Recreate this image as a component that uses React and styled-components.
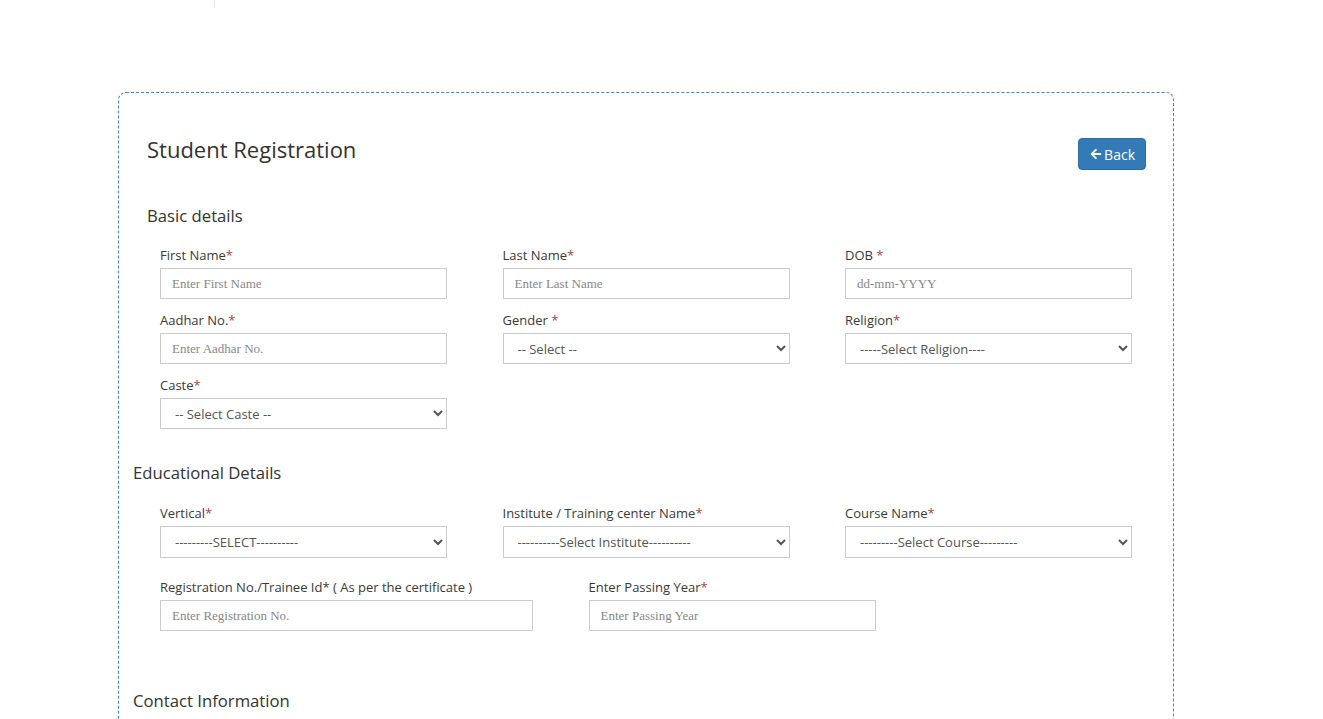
import React from 'react';
import styled, { createGlobalStyle } from 'styled-components';

const GlobalStyle = createGlobalStyle`
  body {
    margin: 0;
    background: #fff;
    font-family: "Open Sans", "Noto Sans", sans-serif;
    color: #333;
  }
`;

const TopStrip = styled.div`
  height: 8px;
  padding-left: 214px;
`;

const StripDivider = styled.div`
  width: 1px;
  height: 8px;
  background: #e6e6e6;
`;

const Card = styled.div`
  box-sizing: border-box;
  width: 1056px;
  margin: 84px 0 0 118px;
  padding: 0 27px 40px 14px;
  border: 1px dashed #3d86c6;
  border-radius: 8px;
  min-height: 700px;
`;

const Header = styled.div`
  display: flex;
  justify-content: space-between;
  align-items: flex-start;
  padding: 42px 0 0 14px;
`;

const Title = styled.h2`
  margin: 0;
  font-size: 22px;
  font-weight: 400;
  line-height: 28px;
  color: #333;
`;

const BackButton = styled.button`
  display: flex;
  align-items: center;
  gap: 2px;
  margin-top: 3px;
  height: 32px;
  padding: 0 10px 0 11px;
  border: 1px solid #2e6da4;
  border-radius: 4px;
  background: #337ab7;
  color: #fff;
  font-family: "Open Sans", sans-serif;
  font-size: 14px;
  cursor: pointer;
`;

const SectionTitle = styled.h4`
  margin: ${p => p.$top}px 0 0 ${p => p.$indent}px;
  font-size: 16.7px;
  font-weight: 400;
  line-height: 24px;
  color: #333;
`;

const Grid = styled.div`
  display: grid;
  grid-template-columns: ${p => p.$cols || '287px 287px 287px'};
  column-gap: 55.5px;
  row-gap: 12px;
  padding-left: 27px;
  margin-top: ${p => p.$top}px;
`;

const Field = styled.div`
  display: flex;
  flex-direction: column;
`;

const Label = styled.label`
  font-size: 13px;
  line-height: 18px;
  margin-bottom: 4px;
  color: #3a3a3a;
`;

const Req = styled.span`
  color: #a94442;
`;

const TextInput = styled.input`
  box-sizing: border-box;
  height: 31px;
  padding: 0 11px;
  border: 1px solid #ccc;
  font-family: "Liberation Serif", serif;
  font-size: 13px;
  color: #333;
  &::placeholder {
    color: #888;
  }
`;

const Select = styled.select`
  box-sizing: border-box;
  height: ${p => p.$h || 31}px;
  padding: 0 8px 0 10px;
  border: 1px solid #ccc;
  border-radius: 0;
  background: #fff;
  font-family: "Open Sans", sans-serif;
  font-size: 13px;
  color: #555;
`;

const ArrowLeft = () => (
  <svg width="12" height="12" viewBox="0 0 448 512" fill="currentColor">
    <path d="M257.5 445.1l-22.2 22.2c-9.4 9.4-24.6 9.4-33.9 0L7 273c-9.4-9.4-9.4-24.6 0-33.9L201.4 44.7c9.4-9.4 24.6-9.4 33.9 0l22.2 22.2c9.5 9.5 9.3 25-.4 34.3L136.6 216H424c13.3 0 24 10.7 24 24v32c0 13.3-10.7 24-24 24H136.6l120.5 114.8c9.8 9.3 10 24.8.4 34.3z" />
  </svg>
);

const TextField = ({ label, star, placeholder }) => (
  <Field>
    <Label>{label}<Req>{star}</Req></Label>
    <TextInput placeholder={placeholder} />
  </Field>
);

const SelectField = ({ label, star, option, h }) => (
  <Field>
    <Label>{label}<Req>{star}</Req></Label>
    <Select $h={h} defaultValue="">
      <option value="">{option}</option>
    </Select>
  </Field>
);

export default function App() {
  return (
    <>
      <GlobalStyle />
      <TopStrip><StripDivider /></TopStrip>
      <Card>
        <Header>
          <Title>Student Registration</Title>
          <BackButton><ArrowLeft />Back</BackButton>
        </Header>

        <SectionTitle $top={34} $indent={14}>Basic details</SectionTitle>
        <Grid $top={18}>
          <TextField label="First Name" star="*" placeholder="Enter First Name" />
          <TextField label="Last Name" star="*" placeholder="Enter Last Name" />
          <TextField label="DOB " star="*" placeholder="dd-mm-YYYY" />
          <TextField label="Aadhar No." star="*" placeholder="Enter Aadhar No." />
          <SelectField label="Gender " star="*" option="-- Select --" />
          <SelectField label="Religion" star="*" option="-----Select Religion----" />
          <SelectField label="Caste" star="*" option="-- Select Caste --" />
        </Grid>

        <SectionTitle $top={32} $indent={0}>Educational Details</SectionTitle>
        <Grid $top={19}>
          <SelectField label="Vertical" star="*" option="---------SELECT----------" h={32} />
          <SelectField label="Institute / Training center Name" star="*" option="----------Select Institute----------" h={32} />
          <SelectField label="Course Name" star="*" option="---------Select Course---------" h={32} />
        </Grid>
        <Grid $top={20} $cols="373px 287px">
          <TextField label="Registration No./Trainee Id* ( As per the certificate )" placeholder="Enter Registration No." />
          <TextField label="Enter Passing Year" star="*" placeholder="Enter Passing Year" />
        </Grid>

        <SectionTitle $top={58} $indent={0}>Contact Information</SectionTitle>
      </Card>
    </>
  );
}
